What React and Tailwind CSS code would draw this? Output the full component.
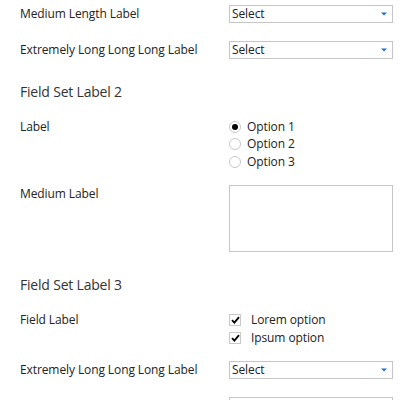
import React from 'react';

function Select() {
  return (
    <div className="flex h-[18px] w-[164px] items-center justify-between border border-[#c6c6c6] bg-white pl-[2px] pr-[5px] text-[12px] leading-none text-[#222]">
      <span>Select</span>
      <svg width="6" height="4" viewBox="0 0 6 4">
        <path d="M0 0.5H6L3 3.5Z" fill="#1f6fd1" />
      </svg>
    </div>
  );
}

function Radio({ label, checked }) {
  return (
    <div className="flex h-[17.5px] items-center">
      <span className="mr-[6px] flex h-[12px] w-[12px] items-center justify-center rounded-full border border-[#c9c9c9] bg-white">
        {checked && <span className="h-[6px] w-[6px] rounded-full bg-black" />}
      </span>
      <span>{label}</span>
    </div>
  );
}

function Check({ label }) {
  return (
    <div className="flex h-[18px] items-center">
      <span className="mr-[10px] flex h-[12px] w-[12px] items-center justify-center border border-[#c9c9c9] bg-white">
        <svg width="9" height="8" viewBox="0 0 9 8">
          <path d="M1 4.2L3.4 6.6L8 1.2" stroke="#000" strokeWidth="1.8" fill="none" />
        </svg>
      </span>
      <span>{label}</span>
    </div>
  );
}

function Row({ label, children, className = '' }) {
  return (
    <div className={`flex ${className}`}>
      <div className="w-[209px] shrink-0 leading-[18px]">{label}</div>
      <div className="w-[164px]">{children}</div>
    </div>
  );
}

export default function App() {
  return (
    <div className="min-h-[400px] bg-white pl-[20px] pt-[5px] text-[12px] tracking-[-0.1px] text-[#222]" style={{ fontFamily: '"Open Sans", "Noto Sans", sans-serif' }}>
      <Row label="Medium Length Label" className="mb-[18px]">
        <Select />
      </Row>
      <Row label="Extremely Long Long Long Label">
        <Select />
      </Row>

      <h3 className="mt-[23px] mb-[16px] text-[14px] leading-[20px] tracking-[-0.2px] text-[#333]">Field Set Label 2</h3>
      <Row label="Label" className="mb-[14px]">
        <Radio label="Option 1" checked />
        <Radio label="Option 2" />
        <Radio label="Option 3" />
      </Row>
      <Row label="Medium Label">
        <div className="h-[67px] w-[164px] border border-[#c6c6c6]" />
      </Row>

      <h3 className="mt-[23px] mb-[16px] text-[14px] leading-[20px] tracking-[-0.2px] text-[#333]">Field Set Label 3</h3>
      <Row label="Field Label" className="mb-[14px]">
        <Check label="Lorem option" />
        <Check label="Ipsum option" />
      </Row>
      <Row label="Extremely Long Long Long Label" className="mb-[18px]">
        <Select />
      </Row>
      <Row label="">
        <div className="h-[18px] w-[164px] border border-[#c6c6c6]" />
      </Row>
    </div>
  );
}
